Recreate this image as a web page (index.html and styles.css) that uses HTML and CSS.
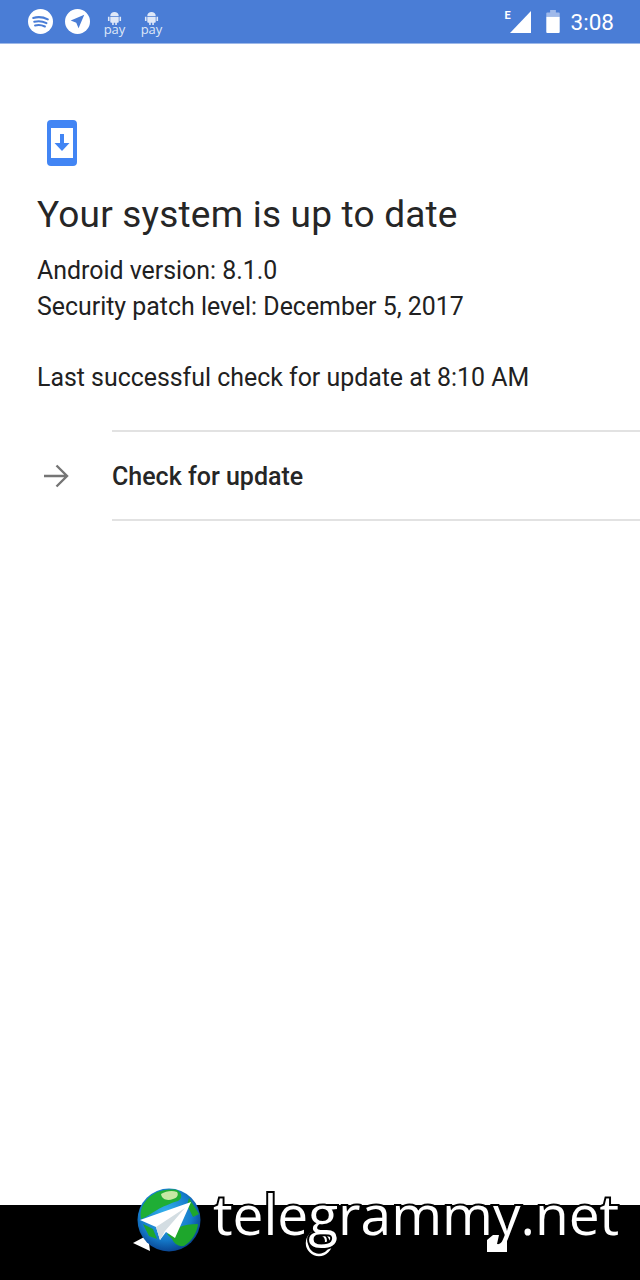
FILE: index.html
```html
<!DOCTYPE html>
<html lang="en">
<head>
  <meta charset="UTF-8">
  <meta name="viewport" content="width=device-width, initial-scale=1.0">
  <title>System update</title>
  <link rel="stylesheet" href="styles.css">
</head>
<body>
  <div class="screen">
    <div class="status-bar">
      <div class="status-left">
        <svg class="circle-icon" viewBox="0 0 24 24">
          <circle cx="12" cy="12" r="12" fill="#fff"/>
          <path d="M5 8.600c4.600-1.300 9.600-.9 14 1.300M6 12.300c3.900-1 8-.6 11.700 1.200M6.800 15.800c3.200-.8 6.500-.4 9.400 1" fill="none" stroke="#4a7dd6" stroke-width="2" stroke-linecap="round"/>
        </svg>
        <svg class="circle-icon" viewBox="0 0 24 24">
          <circle cx="12" cy="12" r="12" fill="#fff"/>
          <path d="M18.500 5.500 5.500 11l5.300 2.200 2.200 5.300z" fill="#4a7dd6"/>
        </svg>
        <div class="pay-icon">
          <svg viewBox="0 0 16 16" class="droid">
            <path d="M3.500 6.500a4.500 4.500 0 0 1 9 0zM3.500 7.300h9v5.200a1 1 0 0 1-1 1H4.500a1 1 0 0 1-1-1zM1 7.300h1.700v4.500H1zM13.300 7.300H15v4.500h-1.700zM5.500 13h1.700v3H5.500zM8.800 13h1.700v3H8.800z" fill="#dfe8f8"/>
          </svg>
          <span>pay</span>
        </div>
        <div class="pay-icon">
          <svg viewBox="0 0 16 16" class="droid">
            <path d="M3.500 6.500a4.500 4.500 0 0 1 9 0zM3.500 7.300h9v5.200a1 1 0 0 1-1 1H4.500a1 1 0 0 1-1-1zM1 7.300h1.700v4.500H1zM13.300 7.300H15v4.500h-1.700zM5.500 13h1.700v3H5.500zM8.800 13h1.700v3H8.800z" fill="#dfe8f8"/>
          </svg>
          <span>pay</span>
        </div>
      </div>
      <div class="status-right">
        <div class="signal">
          <span class="signal-e">E</span>
          <svg viewBox="0 0 22 22" class="signal-icon"><path d="M0 22 21 0v22z" fill="#fff"/></svg>
        </div>
        <svg viewBox="0 0 14 24" class="battery">
          <path d="M4 0h6v2.500h3a1 1 0 0 1 1 1V7H0V3.500a1 1 0 0 1 1-1h3z" fill="#9fb9ea"/>
          <path d="M0 7h14v16a1 1 0 0 1-1 1H1a1 1 0 0 1-1-1z" fill="#fff"/>
        </svg>
        <span class="clock">3:08</span>
      </div>
    </div>

    <div class="content">
      <svg class="phone-icon" viewBox="0 0 30 46">
        <path fill-rule="evenodd" d="M4 0h22a4 4 0 0 1 4 4v38a4 4 0 0 1-4 4H4a4 4 0 0 1-4-4V4a4 4 0 0 1 4-4zM4 8v30h22V8z" fill="#4285f4"/>
        <path d="M13 14h4v9h5.500L15 31l-7.500-8H13z" fill="#4285f4"/>
      </svg>
      <h1>Your system is up to date</h1>
      <p>Android version: 8.1.0</p>
      <p>Security patch level: December 5, 2017</p>
      <p class="last-check">Last successful check for update at 8:10 AM</p>
    </div>

    <div class="action-row">
      <svg class="arrow" viewBox="0 0 26 26">
        <path d="M1 13h23M13.500 2.500 24 13 13.500 23.500" fill="none" stroke="#757575" stroke-width="2.400"/>
      </svg>
      <div class="action-label">Check for update</div>
    </div>

    <div class="spacer"></div>

    <div class="nav-bar"></div>

    <!-- nav buttons and watermark lie over the black bar -->
    <div class="nav-icons">
      <svg class="nav-back" viewBox="0 0 18 18"><path d="M0 9 15 1l2 16z" fill="#fff"/></svg>
      <svg class="nav-home" viewBox="0 0 28 28">
        <circle cx="14" cy="14" r="12" fill="none" stroke="#fff" stroke-width="2.500"/>
        <circle cx="14" cy="12" r="7" fill="none" stroke="#fff" stroke-width="2"/>
      </svg>
      <svg class="nav-recent" viewBox="0 0 20 17"><path d="M0 5 6 0h6l-2 9 4 2 4-6h2v12H0z" fill="#fff"/></svg>
    </div>
    <div class="watermark">
      <svg class="globe" viewBox="0 0 64 64">
        <defs>
          <radialGradient id="sea" cx="45%" cy="40%" r="60%">
            <stop offset="0" stop-color="#35b4ee"/>
            <stop offset="0.7" stop-color="#1479c9"/>
            <stop offset="1" stop-color="#0a4693"/>
          </radialGradient>
        </defs>
        <circle cx="32" cy="32" r="31.500" fill="url(#sea)"/>
        <path d="M8 14C15 4 28 0 40 2c5 3 6 8 1 11-7 2-16 6-21 9-6 3-10 7-16 9-1-6 0-12 4-17z" fill="#1fae35"/>
        <path d="M24 6c5-3 11-4 16-2 2 3 0 6-4 7-5 2-11 1-12-5z" fill="#c6e8a4"/>
        <path d="M30 46c6-5 16-10 31-10-1 9-6 17-14 22-6 1-10-3-12-7zM52 10l10 16-6 3-6-12zM6 36l10 5 4 10-8-3z" fill="#1ea62c"/>
        <path d="M54 14 3 32l16 7 4 13 6-8 9 6z" fill="#fff"/>
        <path d="M19 39 48 20 28 43l-5 9z" fill="#d3dde2"/>
      </svg>
      <span class="watermark-text">telegrammy.net</span>
    </div>
  </div>
</body>
</html>
```

FILE: styles.css
```css
* {
  box-sizing: border-box;
}
body {
  margin: 0;
  background-color: #fff;
  font-family: Roboto, "Liberation Sans", sans-serif;
  color: #212121;
}
.screen {
  position: relative;
  width: 640px;
  height: 1280px;
  display: flex;
  flex-direction: column;
  overflow: hidden;
}
.status-bar {
  height: 44px;
  flex: none;
  background-color: #4a7dd6;
  border-bottom: 1px solid #9db8e8;
  display: flex;
  justify-content: space-between;
  align-items: center;
  padding: 0 26px 0 28px;
  color: #fff;
}
.status-left {
  display: flex;
  align-items: center;
  gap: 12px;
}
.circle-icon {
  width: 25px;
  height: 25px;
}
.pay-icon {
  width: 25px;
  display: flex;
  flex-direction: column;
  align-items: center;
  font-size: 13px;
  line-height: 9px;
  color: #dfe8f8;
  font-family: "Open Sans", sans-serif;
}
.droid {
  width: 15px;
  height: 15px;
}
.status-right {
  display: flex;
  align-items: center;
}
.signal {
  position: relative;
  width: 24px;
  height: 24px;
  margin-right: 14px;
}
.signal-e {
  position: absolute;
  left: -3px;
  top: -1px;
  font-size: 11px;
  font-weight: 700;
}
.signal-icon {
  position: absolute;
  left: 2px;
  top: 1px;
  width: 22px;
  height: 22px;
}
.battery {
  width: 14px;
  height: 23px;
  margin-right: 11px;
}
.clock {
  font-size: 22.500px;
}
.content {
  padding: 76px 0 0 37px;
  flex: none;
}
.phone-icon {
  display: block;
  width: 30px;
  height: 46px;
  margin-left: 10px;
}
h1 {
  margin: 27px 0 16px;
  font-size: 37px;
  line-height: 44px;
  font-weight: 400;
  letter-spacing: 0.2px;
  color: #262626;
}
.content p {
  margin: 0;
  font-size: 24.900px;
  line-height: 36px;
}
.content .last-check {
  margin-top: 35px;
}
.action-row {
  flex: none;
  margin-top: 34px;
  display: flex;
  align-items: center;
  height: 91px;
  padding-left: 43px;
}
.arrow {
  width: 26px;
  height: 26px;
  margin-right: 43px;
  flex: none;
}
.action-label {
  align-self: stretch;
  flex: 1;
  display: flex;
  align-items: center;
  padding-top: 2px;
  border-top: 2px solid #e2e2e2;
  border-bottom: 2px solid #e2e2e2;
  font-size: 25px;
  font-weight: 500;
  color: #262626;
}
.spacer {
  flex: 1;
}
.nav-bar {
  flex: none;
  height: 75px;
  background-color: #000;
}
.nav-icons {
  position: absolute;
  inset: auto 0 0 0;
  height: 75px;
}
.nav-back {
  position: absolute;
  left: 133px;
  top: 29px;
  width: 18px;
  height: 18px;
}
.nav-home {
  position: absolute;
  left: 305px;
  top: 24px;
  width: 28px;
  height: 28px;
}
.nav-recent {
  position: absolute;
  z-index: 1;
  left: 487px;
  top: 30px;
  width: 20px;
  height: 17px;
}
.watermark {
  position: absolute;
  left: 137px;
  top: 1188px;
  display: flex;
  align-items: flex-start;
  gap: 12px;
}
.globe {
  width: 64px;
  height: 64px;
  flex: none;
}
.watermark-text {
  font-family: "Open Sans", sans-serif;
  font-size: 55px;
  line-height: 52px;
  color: #fff;
  -webkit-text-stroke: 4px #000;
  paint-order: stroke fill;
}
```
